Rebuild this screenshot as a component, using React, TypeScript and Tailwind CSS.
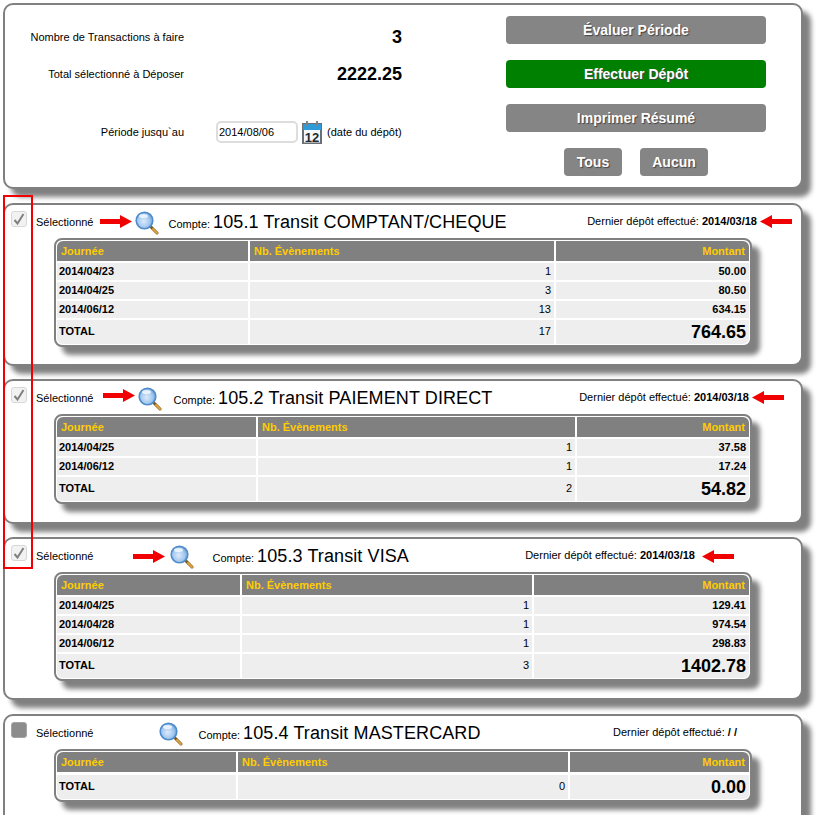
const font = 'font-["Liberation_Sans",Arial,sans-serif]';

type Row = { day: string; count: string; amount: string };

type Account = {
  name: string;
  lastDeposit: string;
  checked: boolean;
  cardClass: string;
  cols: string;
  magMargin: string;
  compteMargin: string;
  lastMargin: string;
  totalMargin: string;
  rows: Row[];
  totalCount: string;
  total: string;
};

const accounts: Account[] = [
  {
    name: '105.1 Transit COMPTANT/CHEQUE',
    lastDeposit: '2014/03/18',
    checked: true,
    cardClass: 'mt-[14px] h-[163px]',
    cols: 'grid-cols-[191px_304px_193px]',
    magMargin: 'ml-[41px]',
    compteMargin: 'ml-[10px]',
    lastMargin: 'mr-[44px]',
    totalMargin: '',
    rows: [
      { day: '2014/04/23', count: '1', amount: '50.00' },
      { day: '2014/04/25', count: '3', amount: '80.50' },
      { day: '2014/06/12', count: '13', amount: '634.15' },
    ],
    totalCount: '17',
    total: '764.65',
  },
  {
    name: '105.2 Transit PAIEMENT DIRECT',
    lastDeposit: '2014/03/18',
    checked: true,
    cardClass: 'mt-[13px] h-[145px]',
    cols: 'grid-cols-[199px_317px_172px]',
    magMargin: 'ml-[44px]',
    compteMargin: 'ml-[12px]',
    lastMargin: 'mr-[52px]',
    totalMargin: '',
    rows: [
      { day: '2014/04/25', count: '1', amount: '37.58' },
      { day: '2014/06/12', count: '1', amount: '17.24' },
    ],
    totalCount: '2',
    total: '54.82',
  },
  {
    name: '105.3 Transit VISA',
    lastDeposit: '2014/03/18',
    checked: true,
    cardClass: 'mt-[13px] h-[163px]',
    cols: 'grid-cols-[183px_290px_215px]',
    magMargin: 'ml-[76px]',
    compteMargin: 'ml-[19px]',
    lastMargin: 'mr-[106px]',
    totalMargin: '',
    rows: [
      { day: '2014/04/25', count: '1', amount: '129.41' },
      { day: '2014/04/28', count: '1', amount: '974.54' },
      { day: '2014/06/12', count: '1', amount: '298.83' },
    ],
    totalCount: '3',
    total: '1402.78',
  },
  {
    name: '105.4 Transit MASTERCARD',
    lastDeposit: '/ /',
    checked: false,
    cardClass: 'mt-[14px] h-[130px]',
    cols: 'grid-cols-[179px_330px_179px]',
    magMargin: 'ml-[65px]',
    compteMargin: 'ml-[16px]',
    lastMargin: 'mr-[64px]',
    totalMargin: 'mt-[1px]',
    rows: [],
    totalCount: '0',
    total: '0.00',
  },
];

function Magnifier() {
  return (
    <svg width="24" height="24" viewBox="0 0 24 24" className="shrink-0">
      <defs>
        <radialGradient id="lens" cx="45%" cy="55%" r="60%">
          <stop offset="0%" stopColor="#dbeafb" />
          <stop offset="60%" stopColor="#a5c8ef" />
          <stop offset="100%" stopColor="#5f9ad8" />
        </radialGradient>
      </defs>
      <path d="M15 15l7 7" stroke="#7a5a22" strokeWidth="3" strokeLinecap="round" />
      <path d="M18 18l4 4" stroke="#e0a23c" strokeWidth="2" strokeLinecap="round" />
      <circle cx="9.5" cy="9.5" r="8.3" fill="url(#lens)" stroke="#4f8ccb" strokeWidth="1.6" />
      <ellipse cx="8.5" cy="5" rx="4.5" ry="2" fill="#eef6fe" opacity="0.9" />
    </svg>
  );
}

function CalendarIcon() {
  return (
    <svg width="20" height="23" viewBox="0 0 20 23" className="ml-[4px] shrink-0">
      <rect x="0" y="2" width="20" height="21" fill="#6a6f73" />
      <rect x="1" y="3" width="18" height="6" fill="#2f9ad8" />
      <rect x="2" y="9" width="16" height="12.5" fill="#f6f7f8" />
      <rect x="4" y="0" width="2" height="5" fill="#7c8286" />
      <rect x="14" y="0" width="2" height="5" fill="#7c8286" />
      <text x="10" y="20.5" textAnchor="middle" fontSize="13" fontWeight="700" fill="#23292d" fontFamily="Liberation Sans, Arial, sans-serif">
        12
      </text>
    </svg>
  );
}

function RedArrow({ dir, className }: { dir: 'left' | 'right'; className: string }) {
  return (
    <svg width="32" height="13" viewBox="0 0 32 13" className={className}>
      {dir === 'right' ? (
        <path d="M0 4h20V0l12 6.5L20 13V9H0z" fill="#f00000" />
      ) : (
        <path d="M32 4H12V0L0 6.5 12 13V9h20z" fill="#f00000" />
      )}
    </svg>
  );
}

function Checkbox({ checked }: { checked: boolean }) {
  if (!checked) {
    return (
      <span className="ml-[6px] mt-[1px] block h-[16px] w-[16px] shrink-0 rounded-[3px] border border-[#a4a4a4] bg-[#8c8c8c]" />
    );
  }
  return (
    <span className="ml-[6px] mt-[1px] flex h-[16px] w-[16px] shrink-0 items-center justify-center rounded-[3px] border border-[#d8d8d8] bg-[#f2f2f2]">
      <svg width="12" height="12" viewBox="0 0 12 12">
        <path d="M1.5 7l3 3.5L10.5 1" fill="none" stroke="#808080" strokeWidth="2" />
      </svg>
    </span>
  );
}

function Cell({
  right,
  bold,
  className = '',
  children,
}: {
  right?: boolean;
  bold?: boolean;
  className?: string;
  children: React.ReactNode;
}) {
  return (
    <div
      className={`flex items-center bg-[#eeeeee] pl-[2px] pr-[3px] text-[11px] leading-[14px] text-black ${
        right ? 'justify-end' : ''
      } ${bold ? 'font-bold' : ''} ${className}`}
    >
      {children}
    </div>
  );
}

function AccountCard({ account }: { account: Account }) {
  return (
    <section
      className={`w-[800px] rounded-[10px] border-2 border-[#808080] bg-white shadow-[8px_8px_5px_#808080] ${account.cardClass}`}
    >
      <div className="flex h-[33px] items-start pt-[5px]">
        <Checkbox checked={account.checked} />
        <span className="ml-[9px] mt-[4px] text-[11px] leading-[16px] text-black">Sélectionné</span>
        <span className={`mt-[1px] ${account.magMargin}`}>
          <Magnifier />
        </span>
        <span className={`mt-[5px] whitespace-nowrap text-[11px] leading-[18px] text-black ${account.compteMargin}`}>
          Compte:
        </span>
        <span className="ml-[3px] mt-[1px] whitespace-nowrap text-[18px] leading-[22px] tracking-[0.1px] text-black">
          {account.name}
        </span>
        <span className={`ml-auto mt-[3px] whitespace-nowrap text-[11px] leading-[16px] text-black ${account.lastMargin}`}>
          Dernier dépôt effectué: <b>{account.lastDeposit}</b>
        </span>
      </div>
      <div className="ml-[49px] w-[698px] rounded-[8px] border-2 border-[#808080] bg-white p-px shadow-[8px_8px_5px_#808080]">
        <div className={`grid gap-[2px] ${account.cols}`}>
          <div className="flex h-[20px] items-center rounded-tl-[6px] bg-[#808080] pl-[4px] pt-[1px] text-[11px] font-bold text-[#ffcc00]">
            Journée
          </div>
          <div className="flex h-[20px] items-center bg-[#808080] pl-[4px] pt-[1px] text-[11px] font-bold text-[#ffcc00]">
            Nb. Évènements
          </div>
          <div className="flex h-[20px] items-center justify-end rounded-tr-[6px] bg-[#808080] pr-[4px] pt-[1px] text-[11px] font-bold text-[#ffcc00]">
            Montant
          </div>
          {account.rows.map((row) => (
            <div key={row.day} className="col-span-3 grid h-[17px] grid-cols-subgrid">
              <Cell bold className="pb-[2px]">
                {row.day}
              </Cell>
              <Cell right className="pb-[2px]">
                {row.count}
              </Cell>
              <Cell right bold className="pb-[2px]">
                {row.amount}
              </Cell>
            </div>
          ))}
          <div className={`col-span-3 grid h-[24px] grid-cols-subgrid ${account.totalMargin}`}>
            <Cell bold className="rounded-bl-[6px] pb-[2px]">
              TOTAL
            </Cell>
            <Cell right className="pb-[2px]">
              {account.totalCount}
            </Cell>
            <div className="flex items-center justify-end rounded-br-[6px] bg-[#eeeeee] pr-[3px] text-[18px] leading-[20px] font-bold text-black">
              {account.total}
            </div>
          </div>
        </div>
      </div>
    </section>
  );
}

function ActionButton({ color, className, children }: { color: string; className: string; children: React.ReactNode }) {
  return (
    <button
      className={`flex h-[28px] items-center justify-center rounded-[4px] text-[14px] font-bold text-white [text-shadow:1px_1px_1px_#444] ${color} ${className}`}
    >
      {children}
    </button>
  );
}

export default function App() {
  return (
    <div className={`relative h-[815px] w-[823px] overflow-hidden bg-white pl-[3px] pt-[3px] ${font}`}>
      <section className="flex h-[186px] w-[800px] rounded-[10px] border-2 border-[#808080] bg-white shadow-[8px_8px_5px_#808080]">
        <div className="w-[397px] text-[11px] text-black">
          <div className="mt-[22px] flex h-[20px] items-center justify-between">
            <span className="w-[179px] text-right">Nombre de Transactions à faire</span>
            <span className="text-[18px] font-bold">3</span>
          </div>
          <div className="mt-[17px] flex h-[20px] items-center justify-between">
            <span className="w-[179px] text-right">Total sélectionné à Déposer</span>
            <span className="text-[18px] font-bold">2222.25</span>
          </div>
          <div className="mt-[37px] flex h-[22px] items-center">
            <span className="w-[179px] text-right">Période jusqu`au</span>
            <input
              readOnly
              value="2014/08/06"
              className="ml-[32px] h-[22px] w-[82px] rounded-[5px] border-2 border-[#dddddd] bg-white px-[1px] text-[11px] text-black outline-none"
            />
            <CalendarIcon />
            <span className="ml-[5px] whitespace-nowrap">(date du dépôt)</span>
          </div>
        </div>
        <div className="ml-[104px] flex w-[260px] flex-col gap-[16px] pt-[11px]">
          <ActionButton color="bg-[#858585]" className="w-full">
            Évaluer Période
          </ActionButton>
          <ActionButton color="bg-[#008000]" className="w-full">
            Effectuer Dépôt
          </ActionButton>
          <ActionButton color="bg-[#858585]" className="w-full">
            Imprimer Résumé
          </ActionButton>
          <div className="ml-[58px] flex gap-[18px]">
            <ActionButton color="bg-[#858585]" className="w-[58px]">
              Tous
            </ActionButton>
            <ActionButton color="bg-[#858585]" className="w-[68px]">
              Aucun
            </ActionButton>
          </div>
        </div>
      </section>

      {accounts.map((account) => (
        <AccountCard key={account.name} account={account} />
      ))}

      {/* annotations drawn over the screenshot */}
      <div className="absolute left-[3px] top-[195px] h-[374px] w-[30px] border-2 border-[#f00000]" />
      <RedArrow dir="right" className="absolute left-[100px] top-[215px]" />
      <RedArrow dir="left" className="absolute left-[760px] top-[215px]" />
      <RedArrow dir="right" className="absolute left-[103px] top-[389px]" />
      <RedArrow dir="left" className="absolute left-[752px] top-[391px]" />
      <RedArrow dir="right" className="absolute left-[133px] top-[550px]" />
      <RedArrow dir="left" className="absolute left-[702px] top-[550px]" />
    </div>
  );
}
